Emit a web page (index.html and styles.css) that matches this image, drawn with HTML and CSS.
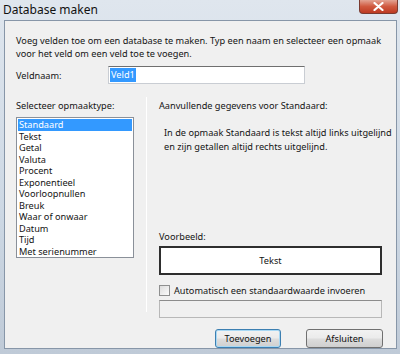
FILE: index.html
```html
<!DOCTYPE html>
<html lang="nl">
<head>
  <meta charset="UTF-8">
  <title>Database maken</title>
  <link rel="stylesheet" href="styles.css">
</head>
<body>
  <div class="window">
    <div class="titlebar">
      <span class="title">Database maken</span>
      <span class="close">
        <svg width="11" height="9" viewBox="0 0 11 9">
          <path d="M1.5 1 L9.5 8 M9.5 1 L1.5 8" stroke="#fff" stroke-width="2.2" stroke-linecap="round"/>
        </svg>
      </span>
    </div>

    <div class="panel">
      <p class="intro">Voeg velden toe om een database te maken. Typ een naam en selecteer een opmaak<br>voor het veld om een veld toe te voegen.</p>

      <div class="name-row">
        <label class="name-label">Veldnaam:</label>
        <div class="textbox"><span class="selected-text">Veld1</span></div>
      </div>

      <div class="columns">
        <div class="left-col">
          <div class="heading">Selecteer opmaaktype:</div>
          <ul class="listbox">
            <li class="active">Standaard</li>
            <li>Tekst</li>
            <li>Getal</li>
            <li>Valuta</li>
            <li>Procent</li>
            <li>Exponentieel</li>
            <li>Voorloopnullen</li>
            <li>Breuk</li>
            <li>Waar of onwaar</li>
            <li>Datum</li>
            <li>Tijd</li>
            <li>Met serienummer</li>
          </ul>
        </div>

        <div class="separator"></div>

        <div class="right-col">
          <div class="heading">Aanvullende gegevens voor Standaard:</div>
          <p class="info">In de opmaak Standaard is tekst altijd links uitgelijnd<br>en zijn getallen altijd rechts uitgelijnd.</p>
          <div class="example-label">Voorbeeld:</div>
          <div class="example-box">Tekst</div>
          <div class="check-row">
            <span class="checkbox"></span>
            <span>Automatisch een standaardwaarde invoeren</span>
          </div>
          <div class="textbox disabled"></div>
        </div>
      </div>

      <div class="buttons">
        <button class="btn default">Toevoegen</button>
        <button class="btn">Afsluiten</button>
      </div>
    </div>
  </div>
</body>
</html>
```

FILE: styles.css
```css
body {
  margin: 0;
  padding: 0;
  overflow: hidden;
  font-family: "Noto Sans", sans-serif;
  font-size: 9.2px;
  color: #141414;
}

.window {
  width: 400px;
  height: 354px;
  background: linear-gradient(to bottom, #dfe6ee, #cdd8e4 60%, #bfcad7);
  display: flex;
  flex-direction: column;
}

/* Title bar */
.titlebar {
  height: 20px;
  display: flex;
  justify-content: space-between;
  align-items: flex-start;
}

.title {
  font-size: 12px;
  line-height: 20px;
  margin-left: 3px;
  color: #111;
}

.close {
  width: 37px;
  height: 13px;
  margin-right: 2px;
  background: linear-gradient(to bottom, #e3a393, #d0593f 50%, #bd3a22);
  border: 1px solid #7a3a30;
  border-top: none;
  border-radius: 0 0 4px 4px;
  display: flex;
  justify-content: center;
  align-items: center;
}

/* Client area */
.panel {
  margin: 0 3px 0 4px;
  height: 327px;
  background-color: #f0f0f0;
  border: 1px solid #8796a8;
  padding: 0 13px 0 11px;
  white-space: nowrap;
}

.intro {
  margin: 13px 0 0 0;
  line-height: 13px;
}

.name-row {
  display: flex;
  align-items: center;
  margin-top: 6px;
  height: 18px;
}

.name-label {
  width: 92px;
}

.textbox {
  width: 194px;
  height: 16px;
  background-color: #fff;
  border: 1px solid #c9cdd3;
  border-top-color: #6f6f6f;
  display: flex;
  align-items: center;
  padding-left: 1px;
}

.selected-text {
  background-color: #3399ff;
  color: #fff;
  line-height: 14px;
  padding: 0 1px;
}

/* Two columns */
.columns {
  display: grid;
  grid-template-columns: 118px 1px 223px;
  column-gap: 12px;
  margin-top: 13px;
}

.heading {
  margin-top: 2px;
  line-height: 13px;
}

.listbox {
  list-style: none;
  margin: 5px 0 0 0;
  padding: 1px;
  height: 137px;
  background-color: #fff;
  border: 1px solid #8a9099;
}

.listbox li {
  line-height: 11.5px;
  padding-left: 1px;
}

.listbox li.active {
  background-color: #3399ff;
  color: #fff;
}

.separator {
  height: 215px;
  background-color: #c8c8c8;
  border-right: 1px solid #fff;
}

.right-col {
  display: flex;
  flex-direction: column;
}

.info {
  margin: 14px 0 0 5px;
  line-height: 14px;
}

.example-label {
  margin-top: 76px;
  line-height: 13px;
}

.example-box {
  margin-top: 3px;
  height: 25px;
  background-color: #fff;
  border: 2px solid #2e2e2e;
  display: flex;
  justify-content: center;
  align-items: center;
}

.check-row {
  display: flex;
  align-items: center;
  margin-top: 10px;
  height: 11px;
  gap: 4px;
}

.checkbox {
  width: 9px;
  height: 9px;
  border: 1px solid #8e8f8f;
  background: linear-gradient(to bottom right, #dcdcdc, #fbfbfb);
}

.textbox.disabled {
  width: 220px;
  margin-top: 4px;
  background-color: #f0f0f0;
  border-color: #b8b8b8;
  border-top-color: #8c8c8c;
}

/* Buttons */
.buttons {
  display: flex;
  justify-content: flex-end;
  gap: 25px;
  margin-top: 11px;
}

.btn {
  font-family: "Noto Sans", sans-serif;
  font-size: 9.2px;
  color: #111;
  height: 19px;
  padding: 0;
  border: 1px solid #707070;
  border-radius: 3px;
  background: linear-gradient(to bottom, #f2f2f2, #ebebeb 48%, #dddddd 52%, #cfcfcf);
  width: 77px;
}

.btn.default {
  width: 66px;
  border-color: #3c7fb1;
  box-shadow: inset 0 0 0 1px #a8d8f4;
}
```
